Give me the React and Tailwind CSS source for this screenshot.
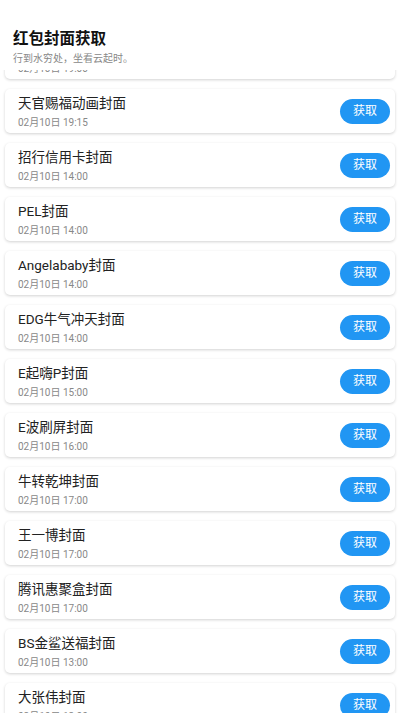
const covers = [
  { name: "春节限定封面", time: "02月10日 19:00" },
  { name: "天官赐福动画封面", time: "02月10日 19:15" },
  { name: "招行信用卡封面", time: "02月10日 14:00" },
  { name: "PEL封面", time: "02月10日 14:00" },
  { name: "Angelababy封面", time: "02月10日 14:00" },
  { name: "EDG牛气冲天封面", time: "02月10日 14:00" },
  { name: "E起嗨P封面", time: "02月10日 15:00" },
  { name: "E波刷屏封面", time: "02月10日 16:00" },
  { name: "牛转乾坤封面", time: "02月10日 17:00" },
  { name: "王一博封面", time: "02月10日 17:00" },
  { name: "腾讯惠聚盒封面", time: "02月10日 17:00" },
  { name: "BS金鲨送福封面", time: "02月10日 13:00" },
  { name: "大张伟封面", time: "02月10日 13:00" },
];

function CoverCard({ name, time }) {
  return (
    <div className="mx-[5px] flex h-[44px] items-center justify-between rounded-[5px] bg-white pl-[13px] pr-[5px] shadow-[0_1px_3px_rgba(0,0,0,0.18)]">
      <div className="flex flex-col">
        <p className="text-[13.5px] leading-[18px] text-[#222]">{name}</p>
        <p className="mt-[5px] text-[10px] leading-[12px] text-[#888]">{time}</p>
      </div>
      <button className="h-[25px] w-[50px] rounded-full bg-[#2196f3] text-[12px] text-white">
        获取
      </button>
    </div>
  );
}

export default function App() {
  return (
    <div
      className="flex h-[713px] w-full flex-col overflow-hidden bg-white"
      style={{ fontFamily: '"Roboto", "Noto Sans CJK SC", sans-serif' }}
    >
      <header className="relative z-10 h-[70px] shrink-0 bg-white px-[13px] pt-[29px]">
        <h1 className="text-[15.5px] font-bold leading-[20px] text-[#111]">
          红包封面获取
        </h1>
        <p className="mt-[4px] text-[10px] leading-[12px] text-[#888]">
          行到水穷处，坐看云起时。
        </p>
      </header>
      <div className="flex-1 overflow-hidden">
        <div className="-mt-[35px] flex flex-col gap-[10px] pb-4">
          {covers.map((c, i) => (
            <CoverCard key={i} {...c} />
          ))}
        </div>
      </div>
    </div>
  );
}
